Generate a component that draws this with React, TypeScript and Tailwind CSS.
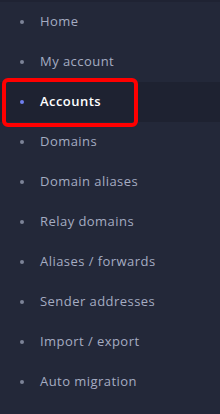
import React from 'react';

const items = [
  'Home',
  'My account',
  'Accounts',
  'Domains',
  'Domain aliases',
  'Relay domains',
  'Aliases / forwards',
  'Sender addresses',
  'Import / export',
  'Auto migration',
];

export default function App() {
  return (
    <div
      className="w-[220px] h-[414px] bg-[#232839] overflow-hidden"
      style={{ fontFamily: '"Open Sans", "Noto Sans", sans-serif' }}
    >
      <div className="h-[2px] bg-[#1f2333]" />
      <ul className="flex flex-col">
        {items.map((label) => {
          const active = label === 'Accounts';
          return (
            <li
              key={label}
              className={`relative flex items-center h-[40px] ${active ? 'bg-[#1e2231]' : ''}`}
            >
              <span
                className={`ml-[20px] w-[4px] h-[4px] rounded-full ${active ? 'bg-[#6f7ff0]' : 'bg-[#7d8398]'}`}
              />
              <span
                className={`ml-[16px] text-[13px] tracking-[0.45px] ${active ? 'text-white font-semibold' : 'text-[#a5acc2]'}`}
              >
                {label}
              </span>
              {active && (
                <span className="absolute left-[2px] top-[-4px] w-[136px] h-[49px] border-[4px] border-[#ff0000] rounded-[6px]" />
              )}
            </li>
          );
        })}
      </ul>
    </div>
  );
}
